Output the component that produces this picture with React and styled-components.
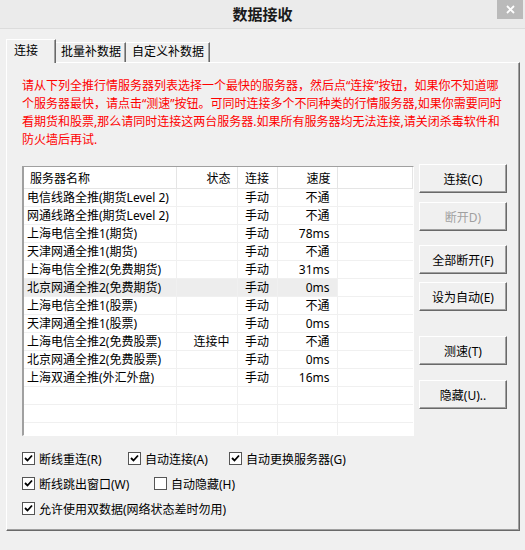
import React from 'react';
import styled, { createGlobalStyle } from 'styled-components';

const GlobalStyle = createGlobalStyle`
  html, body {
    margin: 0;
    padding: 0;
    background: #f0f0f0;
  }
  body {
    font-family: "Noto Sans", "Noto Sans CJK SC", sans-serif;
    font-size: 12px;
    color: #000;
  }
`;

const Window = styled.div`
  width: 525px;
  height: 550px;
  display: flex;
  flex-direction: column;
  background: #f0f0f0;
  overflow: hidden;
`;

const TitleBar = styled.div`
  height: 29px;
  flex-shrink: 0;
  box-sizing: border-box;
  border-bottom: 1px solid #dcdcdc;
  background: #ebebeb;
  display: grid;
  grid-template-columns: 1fr auto 1fr;
`;

const Title = styled.div`
  grid-column: 2;
  font-size: 15px;
  font-weight: bold;
  line-height: 29px;
  color: #1a1a1a;
`;

const CloseButton = styled.div`
  grid-column: 3;
  justify-self: end;
  width: 26px;
  height: 19px;
  margin-right: 2px;
  background: #bababa;
  display: flex;
  align-items: center;
  justify-content: center;
`;

const Body = styled.div`
  flex: 1;
  display: flex;
  flex-direction: column;
  padding: 10px 5px 19px 6px;
`;

const TabStrip = styled.div`
  display: flex;
  align-items: flex-end;
  height: 23px;
  position: relative;
  z-index: 1;
`;

const Tab = styled.div`
  box-sizing: border-box;
  width: ${p => p.$width}px;
  height: ${p => (p.$active ? 24 : 20)}px;
  margin-bottom: ${p => (p.$active ? -1 : 0)}px;
  padding-left: ${p => p.$pad}px;
  padding-top: ${p => (p.$active ? 3 : 1)}px;
  line-height: 16px;
  background: #f0f0f0;
  border-top: 1px solid #fff;
  border-left: ${p => (p.$first ? '1px solid #fff' : 'none')};
  border-right: 1px solid #696969;
  box-shadow: inset -1px 0 #a0a0a0;
  white-space: nowrap;
`;

const Panel = styled.div`
  flex: 1;
  box-sizing: border-box;
  border-top: 1px solid #fff;
  border-left: 1px solid #fff;
  border-right: 1px solid #696969;
  border-bottom: 1px solid #696969;
  box-shadow: inset -1px -1px #a0a0a0;
  padding: 14px 0 0 15px;
  display: flex;
  flex-direction: column;
`;

const Notice = styled.div`
  color: #ff0000;
  line-height: 18px;
  white-space: nowrap;
`;

const Middle = styled.div`
  display: flex;
  align-items: flex-start;
  margin-top: 17px;
`;

const ListView = styled.div`
  width: 392px;
  height: 270px;
  box-sizing: border-box;
  background: #fff;
  border-top: 1px solid #a0a0a0;
  border-left: 2px solid #a0a0a0;
  border-right: 1px solid #fff;
  border-bottom: 1px solid #fff;
  overflow: hidden;
`;

const Table = styled.table`
  border-collapse: collapse;
  table-layout: fixed;
  width: 389px;
`;

const HeadCell = styled.th`
  height: 21px;
  padding: 0 ${p => (p.$align === 'right' ? 6 : 4)}px 0 ${p => (p.$align === 'left' ? 6 : 4)}px;
  font-weight: normal;
  text-align: ${p => p.$align};
  border-right: 1px solid #e5e5e5;
  border-bottom: 1px solid #e5e5e5;
  white-space: nowrap;
  overflow: hidden;
`;

const Row = styled.tr`
  background: ${p => (p.$selected ? '#ededed' : '#fff')};
`;

const Cell = styled.td`
  height: 17px;
  padding: 0 ${p => (p.$align === 'right' ? 7 : 4)}px 0 ${p => (p.$align === 'left' ? 3 : 4)}px;
  line-height: 17px;
  text-align: ${p => p.$align};
  border-right: 1px solid #f0f0f0;
  border-bottom: 1px solid #f0f0f0;
  white-space: nowrap;
  overflow: hidden;
`;

const FillCell = styled.td`
  background: #fff;
  border-bottom: 1px solid #f0f0f0;
`;

const Buttons = styled.div`
  display: flex;
  flex-direction: column;
  margin-left: 5px;
  margin-top: -2px;
`;

const Button = styled.div`
  box-sizing: border-box;
  width: 88px;
  height: 29px;
  margin-top: ${p => p.$gap}px;
  background: #f0f0f0;
  border-top: 1px solid #fff;
  border-left: 1px solid #fff;
  border-right: 1px solid #696969;
  border-bottom: 1px solid #696969;
  box-shadow: inset -1px -1px #a0a0a0;
  display: flex;
  align-items: center;
  justify-content: center;
  color: ${p => (p.$disabled ? '#a0a0a0' : '#000')};
  white-space: nowrap;
`;

const Options = styled.div`
  display: flex;
  flex-direction: column;
  gap: 8px;
  margin-top: 14px;
`;

const OptionRow = styled.div`
  display: flex;
`;

const Option = styled.label`
  display: flex;
  align-items: center;
  width: ${p => (p.$width ? `${p.$width}px` : 'auto')};
  height: 17px;
  white-space: nowrap;
`;

const Box = styled.span`
  box-sizing: border-box;
  width: 13px;
  height: 13px;
  border: 1px solid #555;
  background: #fff;
  margin-right: 4px;
  display: flex;
  align-items: center;
  justify-content: center;
`;

const Check = () => (
  <svg width="9" height="9" viewBox="0 0 9 9">
    <path d="M1 4 L3.5 6.5 L8 1.5" fill="none" stroke="#000" strokeWidth="1.8" />
  </svg>
);

const Checkbox = ({ checked, width, children }) => (
  <Option $width={width}>
    <Box>{checked && <Check />}</Box>
    {children}
  </Option>
);

const servers = [
  ['电信线路全推(期货Level 2)', '', '不通'],
  ['网通线路全推(期货Level 2)', '', '不通'],
  ['上海电信全推1(期货)', '', '78ms'],
  ['天津网通全推1(期货)', '', '不通'],
  ['上海电信全推2(免费期货)', '', '31ms'],
  ['北京网通全推2(免费期货)', '', '0ms', true],
  ['上海电信全推1(股票)', '', '不通'],
  ['天津网通全推1(股票)', '', '0ms'],
  ['上海电信全推2(免费股票)', '连接中', '不通'],
  ['北京网通全推2(免费股票)', '', '0ms'],
  ['上海双通全推(外汇外盘)', '', '16ms'],
];

const notice = [
  '请从下列全推行情服务器列表选择一个最快的服务器，然后点“连接”按钮，如果你不知道哪',
  '个服务器最快，请点击“测速”按钮。可同时连接多个不同种类的行情服务器,如果你需要同时',
  '看期货和股票,那么请同时连接这两台服务器.如果所有服务器均无法连接,请关闭杀毒软件和',
  '防火墙后再试.',
];

const buttons = [
  ['连接(C)', 0],
  ['断开D)', 9, true],
  ['全部断开(F)', 14],
  ['设为自动(E)', 8],
  ['测速(T)', 25],
  ['隐藏(U)..', 15],
];

export default function App() {
  return (
    <Window>
      <GlobalStyle />
      <TitleBar>
        <Title>数据接收</Title>
        <CloseButton>
          <svg width="9" height="9" viewBox="0 0 9 9">
            <path d="M1 1 L8 8 M8 1 L1 8" stroke="#fff" strokeWidth="1.8" />
          </svg>
        </CloseButton>
      </TitleBar>
      <Body>
        <TabStrip>
          <Tab $active $first $width={50} $pad={7}>连接</Tab>
          <Tab $width={70} $pad={5}>批量补数据</Tab>
          <Tab $width={84} $pad={6}>自定义补数据</Tab>
        </TabStrip>
        <Panel>
          <Notice>
            {notice.map(line => (
              <div key={line}>{line}</div>
            ))}
          </Notice>
          <Middle>
            <ListView>
              <Table>
                <colgroup>
                  <col style={{ width: 152 }} />
                  <col style={{ width: 61 }} />
                  <col style={{ width: 40 }} />
                  <col style={{ width: 60 }} />
                  <col />
                </colgroup>
                <thead>
                  <tr>
                    <HeadCell $align="left">服务器名称</HeadCell>
                    <HeadCell $align="right">状态</HeadCell>
                    <HeadCell $align="center">连接</HeadCell>
                    <HeadCell $align="right">速度</HeadCell>
                    <HeadCell $align="left" />
                  </tr>
                </thead>
                <tbody>
                  {servers.map(([name, state, speed, selected]) => (
                    <Row key={name} $selected={selected}>
                      <Cell $align="left">{name}</Cell>
                      <Cell $align="right">{state}</Cell>
                      <Cell $align="center">手动</Cell>
                      <Cell $align="right">{speed}</Cell>
                      <FillCell />
                    </Row>
                  ))}
                  {[0, 1, 2].map(i => (
                    <Row key={`empty-${i}`}>
                      <Cell $align="left" />
                      <Cell $align="right" />
                      <Cell $align="center" />
                      <Cell $align="right" />
                      <FillCell />
                    </Row>
                  ))}
                </tbody>
              </Table>
            </ListView>
            <Buttons>
              {buttons.map(([label, gap, disabled]) => (
                <Button key={label} $gap={gap} $disabled={disabled}>
                  {label}
                </Button>
              ))}
            </Buttons>
          </Middle>
          <Options>
            <OptionRow>
              <Checkbox checked width={106}>断线重连(R)</Checkbox>
              <Checkbox checked width={101}>自动连接(A)</Checkbox>
              <Checkbox checked>自动更换服务器(G)</Checkbox>
            </OptionRow>
            <OptionRow>
              <Checkbox checked width={132}>断线跳出窗口(W)</Checkbox>
              <Checkbox>自动隐藏(H)</Checkbox>
            </OptionRow>
            <OptionRow>
              <Checkbox checked>允许使用双数据(网络状态差时勿用)</Checkbox>
            </OptionRow>
          </Options>
        </Panel>
      </Body>
    </Window>
  );
}
